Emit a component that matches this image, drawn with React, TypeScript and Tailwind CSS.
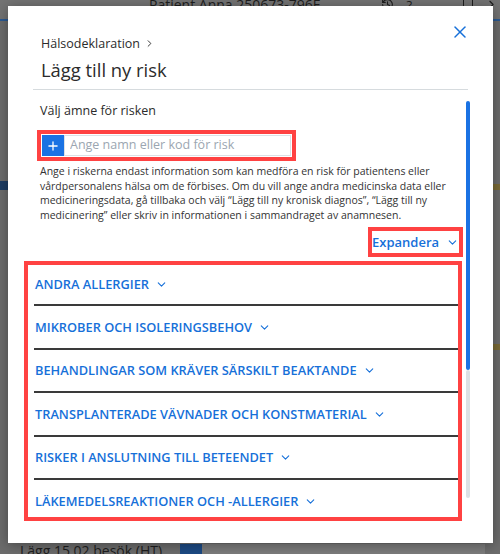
import { X, Plus, ChevronDown, ChevronRight, History } from 'lucide-react'

const riskGroups = [
  'Andra allergier',
  'Mikrober och isoleringsbehov',
  'Behandlingar som kräver särskilt beaktande',
  'Transplanterade vävnader och konstmaterial',
  'Risker i anslutning till beteendet',
  'Läkemedelsreaktioner och -allergier',
]

function RiskGroupRow({ label, first }: { label: string; first?: boolean }) {
  return (
    <>
      {!first && <div className="ml-[6px] h-[2px] shrink-0 bg-[#3a3a3a]" />}
      <button
        className={`flex shrink-0 items-center gap-[6px] pl-[7px] text-left text-[12.8px] font-semibold uppercase text-[#1670d9] ${
          first ? 'h-[39px]' : 'h-[41.5px]'
        }`}
      >
        {label}
        <ChevronDown className="h-[13px] w-[13px]" strokeWidth={2} />
      </button>
    </>
  )
}

export default function App() {
  return (
    <div className="relative flex h-[554px] w-[500px] flex-col overflow-hidden bg-[#6c6c6c] font-['Open_Sans',sans-serif]">
      {/* dimmed app behind the dialog */}
      <div className="flex h-[19px] shrink-0 items-start bg-[#737373] text-[#1e1e1e]">
        <span className="ml-[149px] -mt-[5px] text-[14px] leading-[19px]">Patient Anna 250673-796E</span>
        <div className="ml-auto -mt-[4px] flex items-start gap-[12px] pr-[2px] text-[13px]">
          <History className="mt-[2px] h-[13px] w-[13px]" />
          <span>?</span>
          <span className="ml-[14px]">—</span>
          <span className="h-[12px] w-[10px] border border-[#1e1e1e]" />
          <ChevronRight className="mt-[2px] h-[13px] w-[13px]" />
        </div>
      </div>
      <div className="h-[2px] shrink-0 bg-[#2b5a93]" />
      <div className="flex flex-1 justify-between">
        <div className="mt-[160px] h-[9px] w-[8px] bg-[#1d3d63]" />
        <div className="flex w-[7px] flex-col">
          <div className="mt-[163px] h-[6px] bg-[#7a6a36]" />
          <div className="mt-[154px] h-[6px] bg-[#7a6a36]" />
        </div>
      </div>
      <div className="flex h-[11px] shrink-0 items-start">
        <span className="ml-[20px] mt-[-2px] text-[14px] leading-[19px] text-[#1e1e1e]">Lägg 15.02 besök (HT)</span>
        <div className="ml-[18px] mt-[1px] h-[10px] w-[22px] bg-[#1c4a84]" />
        <div className="mt-[1px] h-[10px] w-[283px] bg-[#7c7c7c]" />
      </div>

      {/* dialog */}
      <div className="absolute left-[8px] top-[6px] flex h-[537px] w-[485px] flex-col bg-white text-[#2b2b2b] shadow-[0_2px_12px_rgba(0,0,0,0.35)]">
        <div className="mx-[25px] flex shrink-0 items-start border-b border-[#d6dbde] pb-[7px] pt-[19px]">
          <div className="mt-[10px] flex flex-col pl-[8px]">
            <div className="flex items-center gap-[4px] text-[12.5px] leading-[17px]">
              Hälsodeklaration
              <ChevronRight className="h-[11px] w-[11px]" strokeWidth={2} />
            </div>
            <h1 className="mt-[6px] text-[18.4px] leading-[24px]">Lägg till ny risk</h1>
          </div>
          <button className="-mt-[3px] ml-auto -mr-[2px] text-[#1670d9]">
            <X className="h-[20px] w-[20px]" strokeWidth={1.8} />
          </button>
        </div>

        <div className="flex flex-1 overflow-hidden">
          <div className="ml-[16px] flex w-[438px] flex-col">
            <p className="mt-[11.5px] pl-[16px] text-[12.5px] leading-[17px]">Välj ämne för risken</p>

            <div className="ml-[13px] mt-[11.5px] flex h-[31px] w-[259px] shrink-0 border-4 border-[#ff4242] p-[1px]">
              <div className="flex w-[22px] items-center justify-center bg-[#1a72e3] text-white">
                <Plus className="h-[14px] w-[14px]" strokeWidth={2.2} />
              </div>
              <input
                readOnly
                placeholder="Ange namn eller kod för risk"
                className="min-w-0 flex-1 border border-[#dce1e5] px-[5px] text-[12.5px] text-[#2b2b2b] outline-none placeholder:text-[#9ba6b1]"
              />
            </div>

            <p className="mt-[3px] pl-[16px] text-[10.5px] leading-[14.6px] text-[#333]">
              <span className="block">Ange i riskerna endast information som kan medföra en risk för patientens eller</span>
              <span className="block">vårdpersonalens hälsa om de förbises. Om du vill ange andra medicinska data eller</span>
              <span className="block">medicineringsdata, gå tillbaka och välj “Lägg till ny kronisk diagnos”, “Lägg till ny</span>
              <span className="block">medicinering” eller skriv in informationen i sammandraget av anamnesen.</span>
            </p>

            <div className="mr-[-1px] mt-[5px] flex h-[30px] w-[95px] shrink-0 items-center justify-center gap-[7px] self-end border-4 border-[#ff4242] text-[13px] font-semibold text-[#1670d9]">
              Expandera
              <ChevronDown className="h-[13px] w-[13px]" strokeWidth={2} />
            </div>

            <div className="mt-[4px] flex h-[260px] shrink-0 flex-col overflow-hidden border-4 border-[#ff4242]">
              {riskGroups.map((label, i) => (
                <RiskGroupRow key={label} label={label} first={i === 0} />
              ))}
            </div>
          </div>

          {/* scrollbar */}
          <div className="ml-[4px] mt-[11px] flex w-[4px] flex-col">
            <div className="h-[269px] rounded-full bg-[#1a72e3]" />
            <div className="h-[128px] rounded-full bg-[#dce1e5]" />
          </div>
        </div>
      </div>
    </div>
  )
}
